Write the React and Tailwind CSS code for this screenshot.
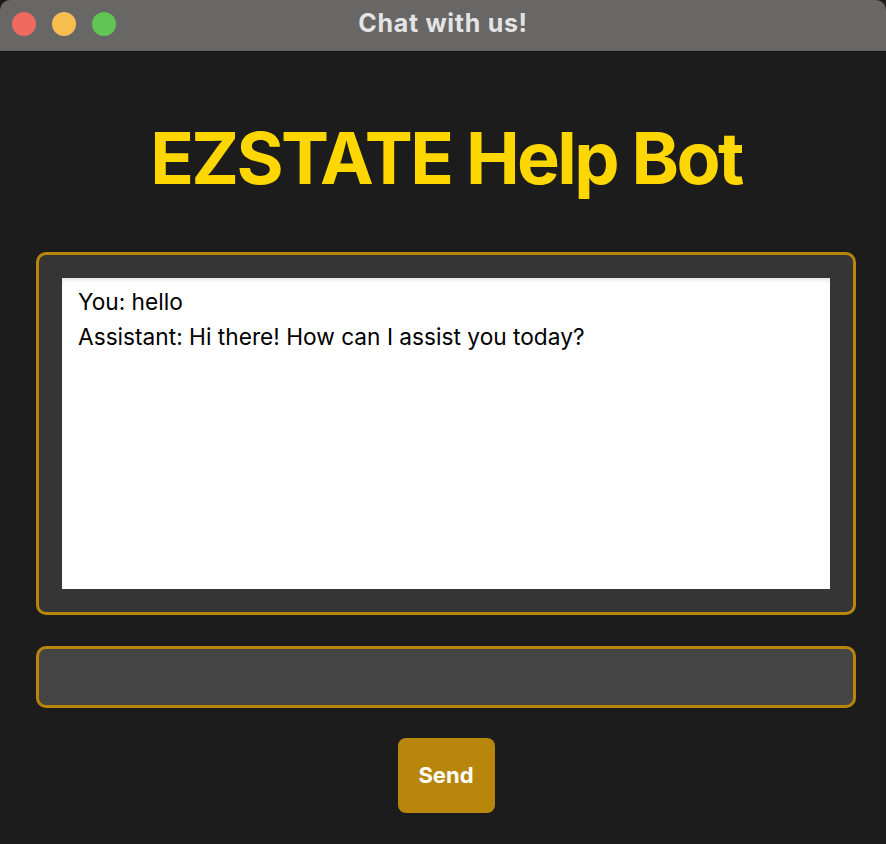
import React from 'react';

const App = () => {
  return (
    <div className="w-[886px] h-[844px] bg-[#1c1c1c] flex flex-col overflow-hidden" style={{ fontFamily: 'Inter, "Noto Sans", sans-serif' }}>
      {/* barra de titulo */}
      <div className="relative h-[52px] bg-[#686766] rounded-tl-[10px] rounded-tr-[10px] border-b border-[#111] flex items-center justify-center shrink-0">
        <div className="absolute left-[12px] top-[12px] flex gap-4">
          <span className="w-6 h-6 rounded-full bg-[#ee6a5f]" />
          <span className="w-6 h-6 rounded-full bg-[#f5be4f]" />
          <span className="w-6 h-6 rounded-full bg-[#61c554]" />
        </div>
        <span className="text-[25px] font-bold text-[#e4e4e4] tracking-[0.7px] -mt-[4px]">Chat with us!</span>
      </div>

      <div className="flex flex-col items-center pl-[36px] pr-[30px]">
        <h1 className="mt-[58px] h-[96px] flex items-center text-[72px] font-bold text-[#ffd700] tracking-[-2.6px] leading-none">
          EZSTATE Help Bot
        </h1>

        {/* area del chat */}
        <div className="mt-[46px] w-full h-[363px] rounded-[10px] border-[3px] border-[#b8860b] bg-[#353535] p-[23px]">
          <div className="w-full h-full bg-white shadow-[inset_0_4px_4px_-2px_rgba(0,0,0,0.12)] px-[16px] pt-[6px] text-[22.7px] leading-[35px] text-black">
            <p>You: hello</p>
            <p>Assistant: Hi there! How can I assist you today?</p>
          </div>
        </div>

        <div className="mt-[31px] w-full h-[62px] rounded-[10px] border-[3px] border-[#b8860b] bg-[#444444]" />

        <button className="mt-[30px] w-[97px] h-[75px] rounded-[8px] bg-[#b8860b] text-white text-[22px] font-bold">
          Send
        </button>
      </div>
    </div>
  );
};

export default App;
